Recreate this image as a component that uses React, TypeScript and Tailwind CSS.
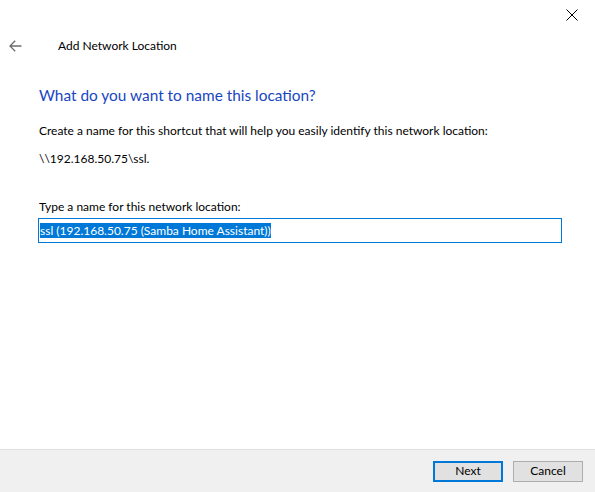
import React from "react";

export default function App() {
  return (
    <div className="w-[595px] h-[492px] bg-white flex flex-col text-[12px] text-black font-['Segoe_UI','Lato',sans-serif] overflow-hidden">
      <div className="h-[31px] flex justify-end items-start">
        <button className="w-[34px] h-[29px] flex items-center justify-center mr-[6px]">
          <svg width="12" height="12" viewBox="0 0 12 12">
            <path d="M0.5 0.5 L11.5 11.5 M11.5 0.5 L0.5 11.5" stroke="#000" strokeWidth="1" fill="none" />
          </svg>
        </button>
      </div>
      <div className="h-[29px] flex items-center">
        <div className="w-[58px] flex items-center pl-[9px]">
          <svg width="13" height="12" viewBox="0 0 13 12">
            <path d="M12.5 6 H1 M6.2 0.8 L1 6 L6.2 11.2" stroke="#6d6d6d" strokeWidth="1.3" fill="none" />
          </svg>
        </div>
        <span>Add Network Location</span>
      </div>
      <div className="flex-1 pl-[39px] pr-[33px] flex flex-col">
        <div className="mt-[25px] h-[21px] leading-[21px] text-[15.4px] text-[#1846c2]">
          What do you want to name this location?
        </div>
        <div className="mt-[17px] leading-[16px]">
          Create a name for this shortcut that will help you easily identify this network location:
        </div>
        <div className="mt-[12px] leading-[16px]">\\192.168.50.75\ssl.</div>
        <div className="mt-[32px] leading-[16px]">Type a name for this network location:</div>
        <div className="mt-[3px] -ml-[1px] w-[524px] h-[25px] border border-[#0078d7] flex items-center pl-[1px]">
          <span className="bg-[#0078d7] text-white leading-[15px] h-[15px] text-[12px]">
            ssl (192.168.50.75 (Samba Home Assistant))
          </span>
        </div>
      </div>
      <div className="h-[43px] border-t border-[#dfdfdf] bg-[#f0f0f0] flex items-center justify-end gap-[10px] pr-[12px]">
        <button className="w-[70px] h-[21px] bg-[#e1e1e1] border-2 border-[#0078d7] flex items-center justify-center leading-none">
          Next
        </button>
        <button className="w-[70px] h-[21px] bg-[#e1e1e1] border border-[#adadad] flex items-center justify-center leading-none">
          Cancel
        </button>
      </div>
    </div>
  );
}
